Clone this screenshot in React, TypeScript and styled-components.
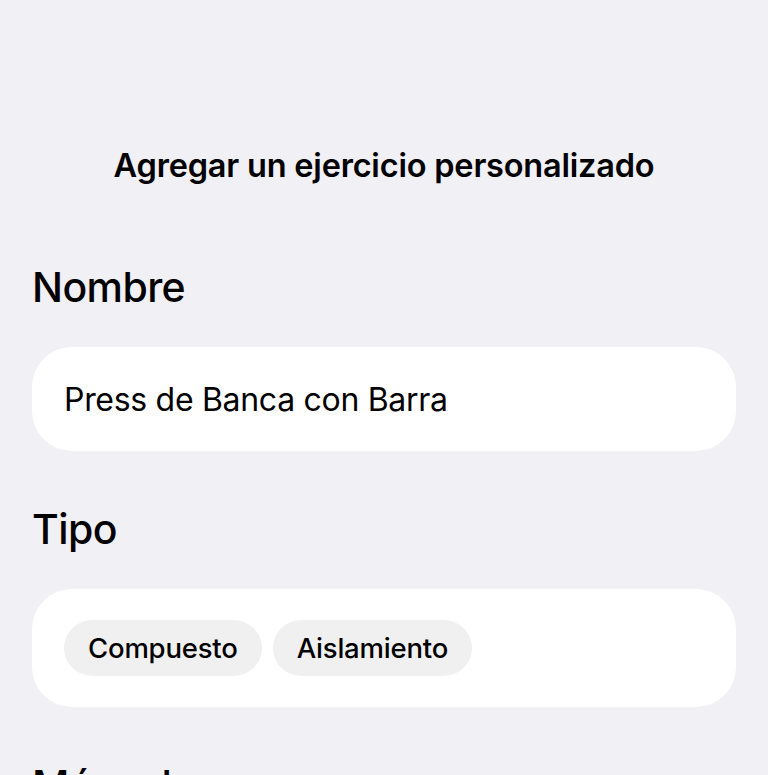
import React, { FC, useState } from 'react';
import styled, { createGlobalStyle } from 'styled-components';

/**
 *
 * Styles
 */
const GlobalStyle = createGlobalStyle`
  html, body {
    margin: 0;
    padding: 0;
    background: #f0f0f5;
  }

  body {
    font-family: Inter, "Noto Sans", "Liberation Sans", sans-serif;
    color: #000;
    -webkit-font-smoothing: antialiased;
  }
`;

const Screen = styled.div`
  display: flex;
  min-height: 775px;
  padding: 146px 32px 0;

  flex-direction: column;
  box-sizing: border-box;
`;

const Title = styled.h1`
  margin: 0 0 76px;
  padding: 0;

  font-size: 32.5px;
  font-weight: 600;
  line-height: 40px;
  letter-spacing: -0.2px;
  text-align: center;
`;

const Section = styled.section`
  display: flex;
  margin-bottom: 53px;

  flex-direction: column;
`;

const SectionLabel = styled.h2`
  margin: 0 0 35px;
  padding: 0;

  font-size: 41px;
  font-weight: 500;
  line-height: 50px;
  letter-spacing: -0.6px;
`;

const Card = styled.div<{ height: number }>`
  display: flex;
  height: ${({ height }) => height}px;
  padding: 0 32px;

  align-items: center;
  box-sizing: border-box;

  background: #fff;
  border-radius: 40px;
`;

const NameInput = styled.input`
  width: 100%;
  padding: 0;

  border: none;
  outline: none;
  background: transparent;

  font-family: inherit;
  font-size: 32px;
  font-weight: 400;
  letter-spacing: -0.3px;
  color: #000;
`;

const ChipRow = styled.div`
  display: flex;
  gap: 11px;
`;

const Chip = styled.button<{ selected: boolean }>`
  height: 56px;
  padding: 0 24px;

  border: none;
  border-radius: 28px;
  background: ${({ selected }) => (selected ? '#dcdce4' : '#f0f0f0')};

  font-family: inherit;
  font-size: 27.5px;
  font-weight: 500;
  letter-spacing: -0.2px;
  color: #000;
  cursor: pointer;
`;

/**
 *
 * Static items
 */
const typeOptions = ['Compuesto', 'Aislamiento'];

const staticTexts = {
  Title: 'Agregar un ejercicio personalizado',
  Name: 'Nombre',
  Type: 'Tipo',
  Muscle: 'Músculo',
};

const App: FC = () => {
  const [name, setName] = useState('Press de Banca con Barra');
  const [type, setType] = useState<string>();

  return (
    <>
      <GlobalStyle />
      <Screen>
        <Title>{staticTexts.Title}</Title>

        <Section>
          <SectionLabel>{staticTexts.Name}</SectionLabel>
          <Card height={104}>
            <NameInput value={name} onChange={(e) => setName(e.target.value)} />
          </Card>
        </Section>

        <Section>
          <SectionLabel>{staticTexts.Type}</SectionLabel>
          <Card height={118}>
            <ChipRow>
              {typeOptions.map((option) => (
                <Chip key={option} selected={type === option} onClick={() => setType(option)}>
                  {option}
                </Chip>
              ))}
            </ChipRow>
          </Card>
        </Section>

        <Section>
          <SectionLabel>{staticTexts.Muscle}</SectionLabel>
        </Section>
      </Screen>
    </>
  );
};

export default App;
